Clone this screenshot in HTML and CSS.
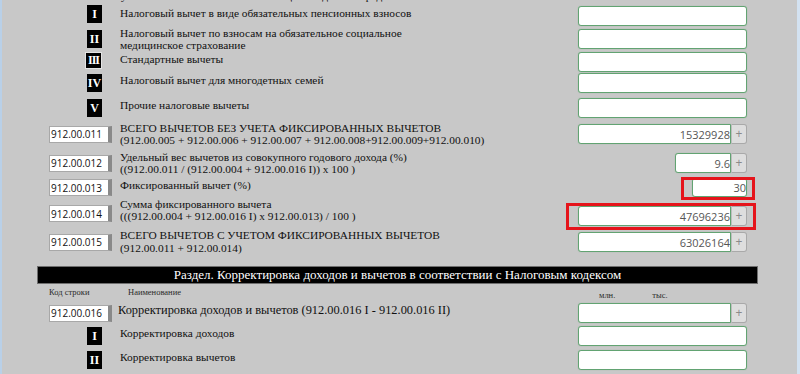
FILE: index.html
```html
<!DOCTYPE html>
<html lang="ru">
<head>
    <meta charset="UTF-8">
    <title>Налоговые вычеты</title>
    <link rel="stylesheet" href="styles.css">
</head>
<body>
<div id="form">
    <div class="cut">установленных статьей 42 настоящего Кодекса в пределах</div>

    <div class="row gap4">
        <span class="badge lift">I</span>
        <span class="name">Налоговый вычет в виде обязательных пенсионных взносов</span>
        <div class="field"><input class="val" type="text"></div>
    </div>
    <div class="row gap3">
        <span class="badge">II</span>
        <span class="name two">Налоговый вычет по взносам на обязательное социальное<br>медицинское страхование</span>
        <div class="field"><input class="val" type="text"></div>
    </div>
    <div class="row gap3">
        <span class="badge thin">III</span>
        <span class="name">Стандартные вычеты</span>
        <div class="field"><input class="val" type="text"></div>
    </div>
    <div class="row gap1">
        <span class="badge">IV</span>
        <span class="name">Налоговый вычет для многодетных семей</span>
        <div class="field"><input class="val" type="text"></div>
    </div>
    <div class="row gap5">
        <span class="badge">V</span>
        <span class="name">Прочие налоговые вычеты</span>
        <div class="field"><input class="val" type="text"></div>
    </div>

    <div class="row gap6">
        <input class="code" type="text" value="912.00.011" readonly>
        <span class="name two">ВСЕГО ВЫЧЕТОВ БЕЗ УЧЕТА ФИКСИРОВАННЫХ ВЫЧЕТОВ<br>(912.00.005 + 912.00.006 + 912.00.007 + 912.00.008+912.00.009+912.00.010)</span>
        <div class="field"><input class="val" type="text" value="15329928"><span class="plus">+</span></div>
    </div>
    <div class="row gap9">
        <input class="code" type="text" value="912.00.012" readonly>
        <span class="name two">Удельный вес вычетов из совокупного годового дохода (%)<br>((912.00.011 / (912.00.004 + 912.00.016 I)) x 100 )</span>
        <div class="field short"><input class="val" type="text" value="9.6"><span class="plus">+</span></div>
    </div>
    <div class="row gap5 low">
        <input class="code" type="text" value="912.00.013" readonly>
        <span class="name">Фиксированный вычет (%)</span>
        <div class="field tiny"><input class="val" type="text" value="30"><span class="hl hl-a"></span></div>
    </div>
    <div class="row gap9">
        <input class="code up" type="text" value="912.00.014" readonly>
        <span class="name two up2">Сумма фиксированного вычета<br>(((912.00.004 + 912.00.016 I) x 912.00.013) / 100 )</span>
        <div class="field"><input class="val" type="text" value="47696236"><span class="plus">+</span><span class="hl hl-b"></span></div>
    </div>
    <div class="row gap6">
        <input class="code" type="text" value="912.00.015" readonly>
        <span class="name two wide">ВСЕГО ВЫЧЕТОВ С УЧЕТОМ ФИКСИРОВАННЫХ ВЫЧЕТОВ<br>(912.00.011 + 912.00.014)</span>
        <div class="field"><input class="val" type="text" value="63026164"><span class="plus">+</span></div>
    </div>

    <div class="bar">Раздел. Корректировка доходов и вычетов в соответствии с Налоговым кодексом</div>

    <div class="heads">
        <span>Код строки</span>
        <span class="head-name">Наименование</span>
        <div class="units"><span>млн.</span><span class="thous">тыс.</span></div>
    </div>

    <div class="row gap1">
        <input class="code" type="text" value="912.00.016" readonly>
        <span class="name flush">Корректировка доходов и вычетов (912.00.016 I - 912.00.016 II)</span>
        <div class="field"><input class="val" type="text"><span class="plus">+</span></div>
    </div>
    <div class="row gap3">
        <span class="badge">I</span>
        <span class="name">Корректировка доходов</span>
        <div class="field"><input class="val" type="text"></div>
    </div>
    <div class="row gap4">
        <span class="badge">II</span>
        <span class="name">Корректировка вычетов</span>
        <div class="field"><input class="val" type="text"></div>
    </div>
</div>
</body>
</html>
```

FILE: styles.css
```css
/* Tax form page */
html, body {
    height: 100%;
}
body {
    margin: 0;
    background-color: #c8c8c8;
    border-left: 2px solid #b9d0e8;
    border-right: 3px solid #d3e2f1;
    overflow: hidden;
    font-family: "Liberation Serif", serif;
    color: #111;
}
#form {
    display: flex;
    flex-direction: column;
    width: 721px;
    margin-left: 35px;
}
.cut {
    margin-top: -9px;
    height: 11px;
    padding-left: 84px;
    font-size: 11.4px;
    line-height: 11px;
    white-space: nowrap;
}

/* rows */
.row {
    display: grid;
    grid-template-columns: 63px 450px 169px;
    grid-template-rows: 20px;
    column-gap: 8px;
    align-items: center;
    padding-left: 12px;
}
.row.low {
    grid-template-rows: 19px;
}
.gap1 { margin-top: 1px; }
.gap3 { margin-top: 3px; }
.gap4 { margin-top: 4px; }
.gap5 { margin-top: 5px; }
.gap6 { margin-top: 6px; }
.gap9 { margin-top: 9px; }

.badge {
    justify-self: end;
    margin-right: 10px;
    width: 15px;
    height: 18px;
    background-color: #000;
    color: #fff;
    font-weight: bold;
    font-size: 12px;
    line-height: 18px;
    text-align: center;
}
.badge.lift {
    margin-bottom: 4px;
}
.badge.thin {
    height: 15px;
    line-height: 15px;
    border: 1px solid #e4e4e4;
    margin-bottom: 4px;
    letter-spacing: -1px;
}
.name {
    font-size: 11.4px;
    line-height: 11px;
    white-space: nowrap;
    margin-bottom: 5px;
}
.name.two {
    margin-bottom: 0;
    line-height: 12px;
}
.name.up2 {
    margin-bottom: 12px;
}
.name.wide {
    line-height: 13px;
}
.name.flush {
    margin-left: -2px;
    font-size: 12.4px;
}

.code {
    box-sizing: border-box;
    width: 63px;
    height: 17px;
    margin: 0;
    padding: 0 0 0 1px;
    border: 1px solid #a8a8a8;
    border-right: 4px solid #898989;
    background-color: #fff;
    font-family: "Open Sans", sans-serif;
    font-size: 10px;
    color: #111;
    outline: none;
}
.code.up {
    margin-bottom: 5px;
}

/* value fields */
.field {
    position: relative;
    display: flex;
    justify-self: end;
    width: 169px;
    height: 20px;
}
.field.short {
    width: 72px;
}
.field.tiny {
    width: 55px;
    height: 19px;
}
.val {
    box-sizing: border-box;
    flex: 1;
    min-width: 0;
    height: 100%;
    margin: 0;
    padding: 0 0 0 4px;
    border: 1px solid #62a372;
    border-radius: 3px;
    box-shadow: 0 0 1px 0 rgba(98, 163, 114, 0.6);
    background-color: #fff;
    font-family: "Open Sans", sans-serif;
    font-size: 11px;
    color: #555;
    text-align: right;
    outline: none;
}
.val:not(:last-child) {
    border-radius: 3px 0 0 3px;
}
.field .plus {
    box-sizing: border-box;
    width: 16px;
    height: 20px;
    border: 1px solid #a9a9a9;
    border-left-color: #bdbdbd;
    border-radius: 0 3px 3px 0;
    background-color: #dedede;
    color: #8a8a8a;
    font-family: "Open Sans", sans-serif;
    font-size: 12px;
    line-height: 17px;
    text-align: center;
}
.field.tiny .val {
    border-radius: 3px;
}

/* red annotation frames */
.hl {
    position: absolute;
    border: 3px solid #e5141b;
}
.hl-a {
    top: -1px;
    bottom: -3px;
    left: -11px;
    right: -8px;
}
.hl-b {
    top: -3px;
    bottom: -4px;
    left: -12px;
    right: -9px;
}

/* section header */
.bar {
    box-sizing: border-box;
    margin-top: 14px;
    height: 18px;
    border: 1px solid #6e6e6e;
    background-color: #000;
    color: #fff;
    font-size: 13px;
    line-height: 16px;
    text-align: center;
    white-space: nowrap;
}
.heads {
    display: grid;
    grid-template-columns: 63px 450px 169px;
    column-gap: 8px;
    height: 18px;
    padding-left: 12px;
    font-size: 8.5px;
    line-height: 10px;
    color: #2a2a2a;
}
.heads > span {
    margin-top: 3px;
}
.head-name {
    padding-left: 8px;
}
.units {
    display: flex;
    margin-top: 6px;
    padding-left: 21px;
}
.thous {
    margin-left: 37px;
}
```
